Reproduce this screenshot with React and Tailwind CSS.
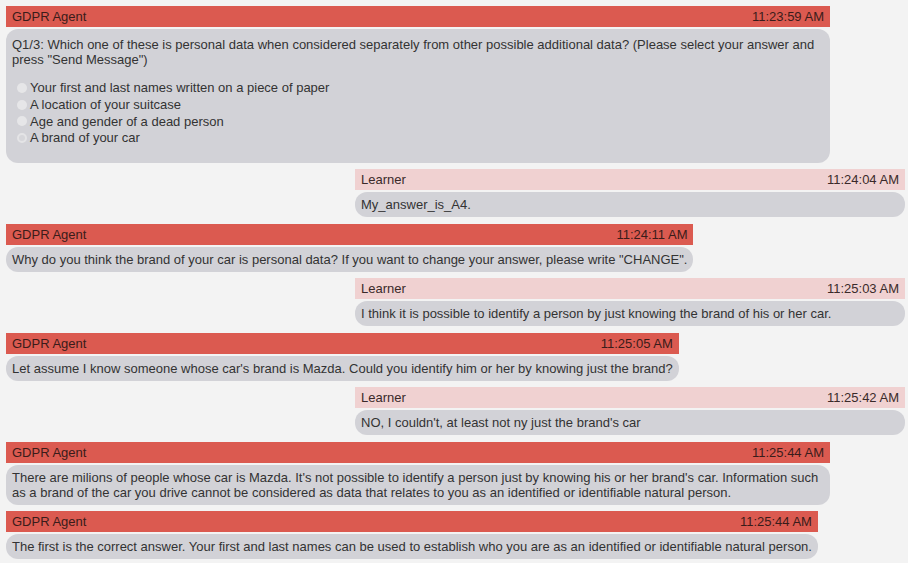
import React from "react";

const font = { fontFamily: '"Liberation Sans", Arial, sans-serif' };

function AgentMsg({ time, children, bodyClass = "py-[5px]" }) {
  return (
    <div className="self-start w-fit max-w-[824px] flex flex-col">
      <div className="h-[21px] flex items-center justify-between gap-8 px-[6px] bg-[#db5a50] text-[#3a1c1a]">
        <span>GDPR Agent</span>
        <span>{time}</span>
      </div>
      <div className={`mt-[2px] rounded-[12px] bg-[#d2d2d7] px-[6px] text-[#333] ${bodyClass}`}>
        {children}
      </div>
    </div>
  );
}

function LearnerMsg({ time, children }) {
  return (
    <div className="self-end w-[550px] flex flex-col">
      <div className="h-[21px] flex items-center justify-between px-[6px] bg-[#f0d1d1] text-[#3a2a2a]">
        <span>Learner</span>
        <span>{time}</span>
      </div>
      <div className="mt-[2px] rounded-[12px] bg-[#d2d2d7] px-[6px] py-[5px] text-[#333]">
        {children}
      </div>
    </div>
  );
}

function Option({ label, checked }) {
  return (
    <div className="flex items-center gap-[3px] h-[16.7px]">
      <span
        className={`inline-block w-[10px] h-[10px] rounded-full ${
          checked ? "border-[2px] border-[#e4e4e6] bg-[#d6d6da]" : "bg-[#e6e6e8]"
        }`}
      />
      <span>{label}</span>
    </div>
  );
}

export default function App() {
  return (
    <div
      className="min-h-screen bg-[#f3f3f3] pl-[6px] pr-[3px] pt-[6px] text-[13px] leading-[15px]"
      style={font}
    >
      <div className="flex flex-col gap-[6.5px]">
        <AgentMsg time="11:23:59 AM" bodyClass="pt-[7.5px] pb-[16.5px]">
          <p>
            Q1/3: Which one of these is personal data when considered separately from other possible additional
            data? (Please select your answer and press "Send Message")
          </p>
          <div className="mt-[13px] pl-[5px] flex flex-col">
            <Option label="Your first and last names written on a piece of paper" />
            <Option label="A location of your suitcase" />
            <Option label="Age and gender of a dead person" />
            <Option label="A brand of your car" checked />
          </div>
        </AgentMsg>

        <LearnerMsg time="11:24:04 AM">My_answer_is_A4.</LearnerMsg>

        <AgentMsg time="11:24:11 AM">
          Why do you think the brand of your car is personal data? If you want to change your answer, please write
          "CHANGE".
        </AgentMsg>

        <LearnerMsg time="11:25:03 AM">
          I think it is possible to identify a person by just knowing the brand of his or her car.
        </LearnerMsg>

        <AgentMsg time="11:25:05 AM">
          Let assume I know someone whose car's brand is Mazda. Could you identify him or her by knowing just the
          brand?
        </AgentMsg>

        <LearnerMsg time="11:25:42 AM">NO, I couldn't, at least not ny just the brand's car</LearnerMsg>

        <AgentMsg time="11:25:44 AM">
          There are milions of people whose car is Mazda. It's not possible to identify a person just by knowing his
          or her brand's car. Information such as a brand of the car you drive cannot be considered as data that
          relates to you as an identified or identifiable natural person.
        </AgentMsg>

        <AgentMsg time="11:25:44 AM">
          The first is the correct answer. Your first and last names can be used to establish who you are as an
          identified or identifiable natural person.
        </AgentMsg>
      </div>
    </div>
  );
}
